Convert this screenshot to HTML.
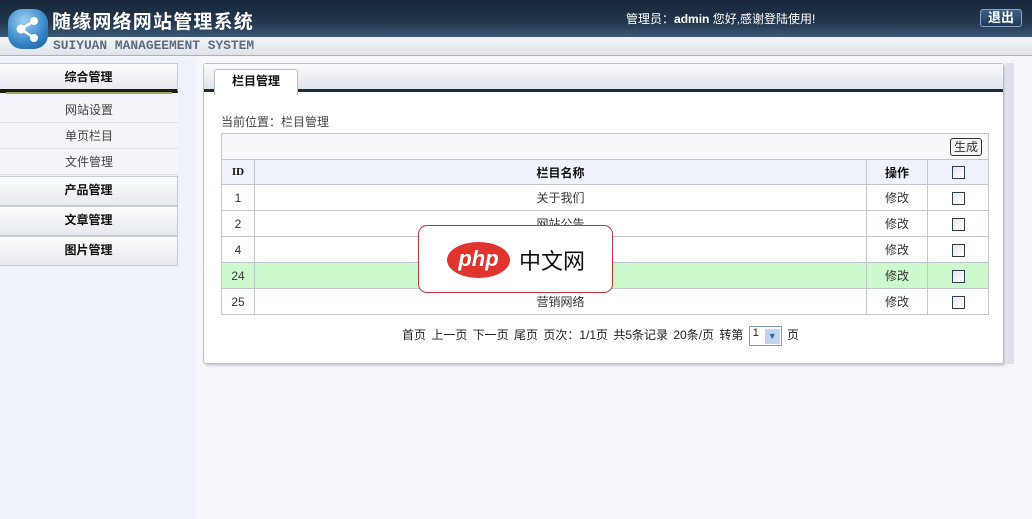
<!DOCTYPE html>
<html><head><meta charset="utf-8"><style>
*{margin:0;padding:0;box-sizing:border-box}
body{width:1032px;height:519px;overflow:hidden;font-family:"Liberation Sans","Noto Sans CJK SC",sans-serif;font-size:12px;color:#333;background:#f5f7fa;position:relative}
.hdr{position:absolute;left:0;top:0;width:1032px;height:37px;background:linear-gradient(#17263a,#22364c 60%,#3b5978)}
.band{position:absolute;left:0;top:37px;width:1032px;height:19px;background:linear-gradient(#f4f6f8,#dfe3e8);border-bottom:1px solid #a9b0b8}
.title{position:absolute;left:52px;top:9px;color:#fff;font-size:19px;font-weight:bold;letter-spacing:1.2px;font-family:"Noto Sans CJK SC",sans-serif;line-height:24px}
.sub{position:absolute;left:53px;top:38px;font-family:"Liberation Mono",monospace;font-weight:bold;font-size:12.9px;color:#5b6c80}
.logo{position:absolute;left:8px;top:9px;width:40px;height:40px;border-radius:14px;background:radial-gradient(circle at 40% 30%,#9ccff2,#3585c8 60%,#1d5a96)}
.admin{position:absolute;left:626px;top:10px;color:#fff;font-size:12px}
.exit{position:absolute;left:980px;top:9px;width:42px;height:18px;border:1px solid #8aa4c4;border-radius:3px;background:linear-gradient(#3d5f86,#203a5a);color:#fff;font-weight:bold;font-size:13px;text-align:center;line-height:16px}
.left{position:absolute;left:0;top:57px;width:196px;height:462px;background:#eef2fb}
.mh{position:absolute;left:0;width:178px;height:30px;background:linear-gradient(#fdfdfe,#e6e9ee);border:1px solid #c6ccd4;border-left:none;text-align:center;font-weight:bold;color:#111;line-height:26px;font-size:12px}
.mi{position:absolute;left:0;width:178px;height:26px;text-align:center;line-height:26px;color:#444;border-bottom:1px solid #dde1e7;background:#f4f5f8}
.panel{position:absolute;left:203px;top:63px;width:801px;height:301px;background:#fff;border:1px solid #b9c0c8;border-radius:3px;box-shadow:2px 2px 2px #c8ccd2}
.tabbar{position:absolute;left:0;top:0;width:799px;height:28px;background:linear-gradient(#fafbfc,#dfe5ec);border-bottom:3px solid #1a2a3a}
.tab{position:absolute;left:10px;top:5px;width:84px;height:26px;background:#fff;border:1px solid #b8c0c8;border-bottom:none;border-radius:3px 3px 0 0;text-align:center;font-weight:bold;color:#111;line-height:22px}
.loc{position:absolute;left:17px;top:49px;color:#444}
table{position:absolute;left:17px;top:69px;width:768px;border-collapse:collapse}
td{border:1px solid #c3c7cc;height:26px;text-align:center;font-size:12px;color:#333}
th{border:1px solid #c3c7cc;height:25px;background:#eef2fa;font-weight:bold;color:#111;font-size:12px}
.cb{display:inline-block;width:13px;height:13px;border:1px solid #2c3e50;background:linear-gradient(135deg,#e8e8e8,#fff);vertical-align:middle}
.pg{position:absolute;left:198px;top:262px;font-size:12px;color:#222;word-spacing:2px}
.sel{display:inline-block;width:33px;height:20px;border:1px solid #7f9db9;vertical-align:middle;position:relative;background:#fff;font-size:11px;padding-left:3px;line-height:12px;word-spacing:0}
.sel i{position:absolute;right:1px;top:2px;width:15px;height:15px;background:#c2d3f0;color:#3a5fa0;font-style:normal;font-size:9px;text-align:center;line-height:15px}
.scr{position:absolute;left:1005px;top:63px;width:9px;height:301px;background:#dde1ea}
.wm{position:absolute;left:418px;top:225px;width:195px;height:68px;background:#fff;border:1px solid #c8363a;border-radius:9px}
.php{position:absolute;left:28px;top:16px;width:63px;height:36px;border-radius:50%;background:#e0342e;color:#fff;font-weight:bold;font-style:italic;font-size:22px;text-align:center;line-height:34px}
.zw{position:absolute;left:100px;top:20px;font-size:22px;color:#111;font-family:"Noto Sans CJK SC",sans-serif;line-height:28px}
</style></head><body>
<div class="hdr"></div><div class="band"></div>
<div class="logo"><svg width="40" height="40" viewBox="0 0 40 40"><g stroke="#fff" stroke-width="2.5"><line x1="13" y1="20" x2="26" y2="12"/><line x1="13" y1="20" x2="26" y2="29"/></g><circle cx="13" cy="20" r="4.5" fill="#fff"/><circle cx="26" cy="12" r="4" fill="#fff"/><circle cx="26" cy="29" r="4" fill="#fff"/></svg></div>
<div class="title">随缘网络网站管理系统</div>
<div class="sub">SUIYUAN MANAGEEMENT SYSTEM</div>
<div class="admin">管理员：<b>admin</b> 您好,感谢登陆使用!</div>
<div class="exit">退出</div>
<div class="left">
<div class="mh" style="top:6px;border-bottom:4px solid #1a1d10">综合管理</div>
<div style="position:absolute;left:6px;top:35px;width:166px;height:2px;background:#9aa860"></div>
<div class="mi" style="top:40px">网站设置</div>
<div class="mi" style="top:66px">单页栏目</div>
<div class="mi" style="top:92px">文件管理</div>
<div class="mh" style="top:119px">产品管理</div>
<div class="mh" style="top:149px">文章管理</div>
<div class="mh" style="top:179px">图片管理</div>
</div>
<div class="panel">
<div class="tabbar"></div><div class="tab">栏目管理</div>
<div class="loc">当前位置：栏目管理</div>
<table>
<tr><td colspan="4" style="text-align:right;background:#f7f8fa;padding-right:6px"><span style="display:inline-block;border:1px solid #333;border-radius:3px;padding:0 3px;font-size:12px;line-height:16px;background:#f5f5f5">生成</span></td></tr>
<tr><th style="width:33px;font-family:'Liberation Serif',serif;font-size:11px">ID</th><th>栏目名称</th><th style="width:61px">操作</th><th style="width:61px"><span class="cb"></span></th></tr>
<tr><td>1</td><td>关于我们</td><td>修改</td><td><span class="cb"></span></td></tr>
<tr><td>2</td><td>网站公告</td><td>修改</td><td><span class="cb"></span></td></tr>
<tr><td>4</td><td>联系我们</td><td>修改</td><td><span class="cb"></span></td></tr>
<tr style="background:#ccfacc"><td>24</td><td>公司简介</td><td>修改</td><td><span class="cb"></span></td></tr>
<tr><td>25</td><td>营销网络</td><td>修改</td><td><span class="cb"></span></td></tr>
</table>
<div class="pg">首页 上一页 下一页 尾页 页次：1/1页 共5条记录 20条/页 转第 <span class="sel">1<i>▼</i></span> 页</div>
</div>
<div class="scr"></div>
<div class="wm"><div class="php">php</div><div class="zw">中文网</div></div>
</body></html>
